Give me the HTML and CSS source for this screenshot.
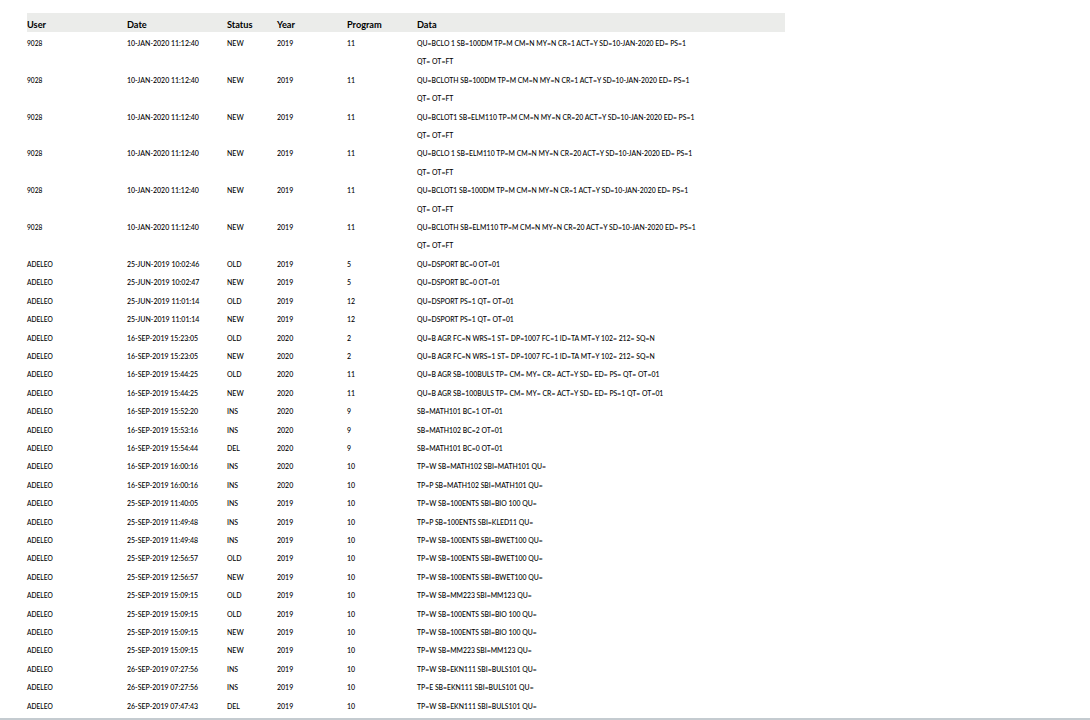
FILE: index.html
```html
<!DOCTYPE html>
<html lang="en">
<head>
<meta charset="utf-8">
<title>Audit log</title>
<link rel="stylesheet" href="styles.css">
</head>
<body>
<main class="page">
<table class="log">
<thead>
<tr><th class="c-user">User</th><th class="c-date">Date</th><th class="c-status">Status</th><th class="c-year">Year</th><th class="c-prog">Program</th><th class="c-data">Data</th></tr>
</thead>
<tbody>
<tr><td>9028</td><td>10-JAN-2020 11:12:40</td><td>NEW</td><td>2019</td><td>11</td><td>QU=BCLO 1 SB=100DM TP=M CM=N MY=N CR=1 ACT=Y SD=10-JAN-2020 ED= PS=1<br>QT= OT=FT</td></tr>
<tr><td>9028</td><td>10-JAN-2020 11:12:40</td><td>NEW</td><td>2019</td><td>11</td><td>QU=BCLOTH SB=100DM TP=M CM=N MY=N CR=1 ACT=Y SD=10-JAN-2020 ED= PS=1<br>QT= OT=FT</td></tr>
<tr><td>9028</td><td>10-JAN-2020 11:12:40</td><td>NEW</td><td>2019</td><td>11</td><td>QU=BCLOT1 SB=ELM110 TP=M CM=N MY=N CR=20 ACT=Y SD=10-JAN-2020 ED= PS=1<br>QT= OT=FT</td></tr>
<tr><td>9028</td><td>10-JAN-2020 11:12:40</td><td>NEW</td><td>2019</td><td>11</td><td>QU=BCLO 1 SB=ELM110 TP=M CM=N MY=N CR=20 ACT=Y SD=10-JAN-2020 ED= PS=1<br>QT= OT=FT</td></tr>
<tr><td>9028</td><td>10-JAN-2020 11:12:40</td><td>NEW</td><td>2019</td><td>11</td><td>QU=BCLOT1 SB=100DM TP=M CM=N MY=N CR=1 ACT=Y SD=10-JAN-2020 ED= PS=1<br>QT= OT=FT</td></tr>
<tr><td>9028</td><td>10-JAN-2020 11:12:40</td><td>NEW</td><td>2019</td><td>11</td><td>QU=BCLOTH SB=ELM110 TP=M CM=N MY=N CR=20 ACT=Y SD=10-JAN-2020 ED= PS=1<br>QT= OT=FT</td></tr>
<tr><td>ADELEO</td><td>25-JUN-2019 10:02:46</td><td>OLD</td><td>2019</td><td>5</td><td>QU=DSPORT BC=0 OT=01</td></tr>
<tr><td>ADELEO</td><td>25-JUN-2019 10:02:47</td><td>NEW</td><td>2019</td><td>5</td><td>QU=DSPORT BC=0 OT=01</td></tr>
<tr><td>ADELEO</td><td>25-JUN-2019 11:01:14</td><td>OLD</td><td>2019</td><td>12</td><td>QU=DSPORT PS=1 QT= OT=01</td></tr>
<tr><td>ADELEO</td><td>25-JUN-2019 11:01:14</td><td>NEW</td><td>2019</td><td>12</td><td>QU=DSPORT PS=1 QT= OT=01</td></tr>
<tr><td>ADELEO</td><td>16-SEP-2019 15:23:05</td><td>OLD</td><td>2020</td><td>2</td><td>QU=B AGR FC=N WRS=1 ST= DP=1007 FC=1 ID=TA MT=Y 102= 212= SQ=N</td></tr>
<tr><td>ADELEO</td><td>16-SEP-2019 15:23:05</td><td>NEW</td><td>2020</td><td>2</td><td>QU=B AGR FC=N WRS=1 ST= DP=1007 FC=1 ID=TA MT=Y 102= 212= SQ=N</td></tr>
<tr><td>ADELEO</td><td>16-SEP-2019 15:44:25</td><td>OLD</td><td>2020</td><td>11</td><td>QU=B AGR SB=100BULS TP= CM= MY= CR= ACT=Y SD= ED= PS= QT= OT=01</td></tr>
<tr><td>ADELEO</td><td>16-SEP-2019 15:44:25</td><td>NEW</td><td>2020</td><td>11</td><td>QU=B AGR SB=100BULS TP= CM= MY= CR= ACT=Y SD= ED= PS=1 QT= OT=01</td></tr>
<tr><td>ADELEO</td><td>16-SEP-2019 15:52:20</td><td>INS</td><td>2020</td><td>9</td><td>SB=MATH101 BC=1 OT=01</td></tr>
<tr><td>ADELEO</td><td>16-SEP-2019 15:53:16</td><td>INS</td><td>2020</td><td>9</td><td>SB=MATH102 BC=2 OT=01</td></tr>
<tr><td>ADELEO</td><td>16-SEP-2019 15:54:44</td><td>DEL</td><td>2020</td><td>9</td><td>SB=MATH101 BC=0 OT=01</td></tr>
<tr><td>ADELEO</td><td>16-SEP-2019 16:00:16</td><td>INS</td><td>2020</td><td>10</td><td>TP=W SB=MATH102 SBI=MATH101 QU=</td></tr>
<tr><td>ADELEO</td><td>16-SEP-2019 16:00:16</td><td>INS</td><td>2020</td><td>10</td><td>TP=P SB=MATH102 SBI=MATH101 QU=</td></tr>
<tr><td>ADELEO</td><td>25-SEP-2019 11:40:05</td><td>INS</td><td>2019</td><td>10</td><td>TP=W SB=100ENTS SBI=BIO 100 QU=</td></tr>
<tr><td>ADELEO</td><td>25-SEP-2019 11:49:48</td><td>INS</td><td>2019</td><td>10</td><td>TP=P SB=100ENTS SBI=KLED11 QU=</td></tr>
<tr><td>ADELEO</td><td>25-SEP-2019 11:49:48</td><td>INS</td><td>2019</td><td>10</td><td>TP=W SB=100ENTS SBI=BWET100 QU=</td></tr>
<tr><td>ADELEO</td><td>25-SEP-2019 12:56:57</td><td>OLD</td><td>2019</td><td>10</td><td>TP=W SB=100ENTS SBI=BWET100 QU=</td></tr>
<tr><td>ADELEO</td><td>25-SEP-2019 12:56:57</td><td>NEW</td><td>2019</td><td>10</td><td>TP=W SB=100ENTS SBI=BWET100 QU=</td></tr>
<tr><td>ADELEO</td><td>25-SEP-2019 15:09:15</td><td>OLD</td><td>2019</td><td>10</td><td>TP=W SB=MM223 SBI=MM123 QU=</td></tr>
<tr><td>ADELEO</td><td>25-SEP-2019 15:09:15</td><td>OLD</td><td>2019</td><td>10</td><td>TP=W SB=100ENTS SBI=BIO 100 QU=</td></tr>
<tr><td>ADELEO</td><td>25-SEP-2019 15:09:15</td><td>NEW</td><td>2019</td><td>10</td><td>TP=W SB=100ENTS SBI=BIO 100 QU=</td></tr>
<tr><td>ADELEO</td><td>25-SEP-2019 15:09:15</td><td>NEW</td><td>2019</td><td>10</td><td>TP=W SB=MM223 SBI=MM123 QU=</td></tr>
<tr><td>ADELEO</td><td>26-SEP-2019 07:27:56</td><td>INS</td><td>2019</td><td>10</td><td>TP=W SB=EKN111 SBI=BULS101 QU=</td></tr>
<tr><td>ADELEO</td><td>26-SEP-2019 07:27:56</td><td>INS</td><td>2019</td><td>10</td><td>TP=E SB=EKN111 SBI=BULS101 QU=</td></tr>
<tr><td>ADELEO</td><td>26-SEP-2019 07:47:43</td><td>DEL</td><td>2019</td><td>10</td><td>TP=W SB=EKN111 SBI=BULS101 QU=</td></tr>
</tbody>
</table>
</main>
<div class="edge"></div>
</body>
</html>
```

FILE: styles.css
```css
html, body {
  margin: 0;
  height: 720px;
  overflow: hidden;
  background: #fff;
}
.page {
  padding: 13px 0 0 27px;
}
.log {
  width: 758px;
  table-layout: fixed;
  border-collapse: collapse;
  font-family: Lato, "Liberation Sans", sans-serif;
  color: #000;
}
.log th {
  height: 15px;
  padding: 4px 0 0;
  background: #ebecea;
  font-size: 9.2px;
  font-weight: 700;
  line-height: 15px;
  text-align: left;
  color: #000;
}
.log td {
  padding: 0;
  font-size: 7px;
  font-weight: 500;
  line-height: 18.4px;
  vertical-align: top;
  white-space: nowrap;
}
.log td:first-child {
  font-size: 6.6px;
}
.log td:last-child {
  font-size: 6.87px;
}
.log tbody tr:first-child td {
  padding-top: 2px;
}
.c-user, .c-date { width: 100px; }
.c-status { width: 50px; }
.c-year, .c-prog { width: 70px; }
.c-data { width: 368px; }
.edge {
  position: fixed;
  left: 0;
  right: 0;
  bottom: 0;
  height: 2px;
  background: #c4cbd0;
}
```
